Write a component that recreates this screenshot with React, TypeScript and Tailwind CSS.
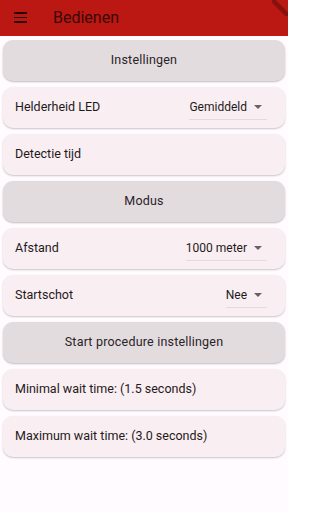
function SectionButton({ label }: { label: string }) {
  return (
    <div className="mx-[3px] h-[41px] rounded-[10px] bg-[#e2dcdf] shadow-[0_1px_2px_rgba(0,0,0,0.25)] flex items-center justify-center text-[12.5px] text-[#2b2326] tracking-[0.2px]">
      {label}
    </div>
  )
}

function Card({ children }: { children: React.ReactNode }) {
  return (
    <div className="mx-[3px] h-[41px] rounded-[10px] bg-[#f9eef1] shadow-[0_1px_2px_rgba(0,0,0,0.22)] flex items-center pl-[12px] pr-[18px] text-[12.5px] text-[#1f1a1c] whitespace-nowrap">
      {children}
    </div>
  )
}

function Dropdown({ value }: { value: string }) {
  return (
    <div className="ml-auto flex items-center justify-end h-[24px] border-b border-[#e4dadd] whitespace-nowrap">
      <span className="text-[12px] text-[#1f1a1c]">{value}</span>
      <span className="ml-[7px] w-0 h-0 border-l-[4px] border-r-[4px] border-t-[4px] border-l-transparent border-r-transparent border-t-[#6b6165]" />
      <span className="w-[5px]" />
    </div>
  )
}

export default function App() {
  return (
    <div className="w-[288px] h-[512px] bg-[#fffbfe] overflow-hidden relative" style={{ fontFamily: 'Roboto, "Liberation Sans", sans-serif' }}>
      {/* App bar */}
      <div className="h-[36px] bg-[#bb1814] border-b-[1.5px] border-[#d3100e] flex items-center relative">
        <div className="ml-[14px] flex flex-col gap-[3px]">
          <span className="block w-[13px] h-[1.5px] bg-[#2a0606]" />
          <span className="block w-[13px] h-[1.5px] bg-[#2a0606]" />
          <span className="block w-[13px] h-[1.5px] bg-[#2a0606]" />
        </div>
        <span className="ml-[26px] text-[16px] text-[#3a0706] leading-none">Bedienen</span>
        <div className="absolute right-0 top-0 w-[16px] h-[16px] bg-[linear-gradient(225deg,transparent_35%,rgba(90,10,10,0.55)_42%,rgba(90,10,10,0.55)_55%,transparent_62%)]" />
      </div>

      <div className="flex flex-col gap-[6px] pt-[4px]">
        <SectionButton label="Instellingen" />
        <Card>
          <span>Helderheid LED</span>
          <Dropdown value="Gemiddeld" />
        </Card>
        <Card>
          <span>Detectie tijd</span>
        </Card>
        <SectionButton label="Modus" />
        <Card>
          <span>Afstand</span>
          <Dropdown value="1000 meter" />
        </Card>
        <Card>
          <span>Startschot</span>
          <Dropdown value="Nee" />
        </Card>
        <SectionButton label="Start procedure instellingen" />
        <Card>
          <span>Minimal wait time: (1.5 seconds)</span>
        </Card>
        <Card>
          <span>Maximum wait time: (3.0 seconds)</span>
        </Card>
      </div>
    </div>
  )
}
